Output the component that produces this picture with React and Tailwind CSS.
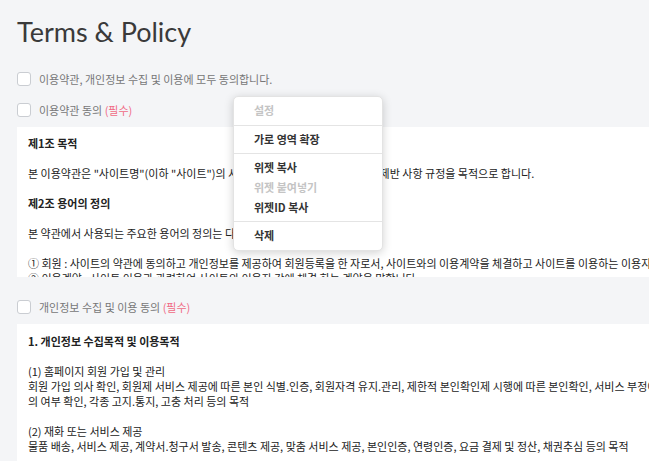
import React from "react";

const kr = { fontFamily: '"Noto Sans CJK KR", "Noto Sans", sans-serif' };

const CheckRow = ({ label, required }) => {
  return (
    <label className="flex items-center gap-[8px] h-[14px] text-[11px] text-[#777]" style={kr}>
      <span className="block w-[14px] h-[14px] bg-white border border-[#cacdd2] rounded-[3px]" />
      <span>
        {label}
        {required && <span className="text-[#f06a85]"> (필수)</span>}
      </span>
    </label>
  );
};

const ContextMenu = () => {
  return (
    <div
      className="absolute left-[233px] top-[96px] w-[150px] bg-white rounded-[5px] shadow-[0_2px_10px_rgba(0,0,0,0.18)] border border-[#e3e3e3] text-[11px] font-semibold text-[#333]"
      style={kr}
    >
      <div className="px-[20px] pt-[7px] pb-[8px] leading-[13px] text-[#c4c4c4]">설정</div>
      <div className="border-t border-[#e4e4e4]" />
      <div className="px-[20px] py-[7px] leading-[13px]">가로 영역 확장</div>
      <div className="border-t border-[#e4e4e4]" />
      <div className="px-[20px] pt-[7px] pb-[7px] flex flex-col gap-[7px] leading-[13px]">
        <div>위젯 복사</div>
        <div className="text-[#c4c4c4]">위젯 붙여넣기</div>
        <div>위젯ID 복사</div>
      </div>
      <div className="border-t border-[#e4e4e4]" />
      <div className="px-[20px] pt-[7px] pb-[8px] leading-[13px]">삭제</div>
    </div>
  );
};

const App = () => {
  return (
    <div className="relative w-full h-[461px] overflow-hidden bg-[#f4f5f7]">
      <div className="pl-[17px] pt-[14px]">
        <h1
          className="text-[27px] leading-[35px] text-[#3a3a3a]"
          style={{ fontFamily: "Lato, sans-serif" }}
        >
          Terms &amp; Policy
        </h1>

        <div className="mt-[23px]">
          <CheckRow label="이용약관, 개인정보 수집 및 이용에 모두 동의합니다." />
        </div>
        <div className="mt-[17px]">
          <CheckRow label="이용약관 동의" required />
        </div>

        {/* 이용약관 box */}
        <div
          className="mt-[10px] w-[800px] h-[150px] overflow-hidden bg-white px-[11px] pt-[9px] text-[11px] leading-[15px] text-[#222] whitespace-nowrap"
          style={kr}
        >
          <p className="font-bold">제1조 목적</p>
          <br />
          <p>
            본 이용약관은 "사이트명"(이하 "사이트")의 서비스의 이용조건과 운영에 관한 제반 사항 규정을 목적으로 합니다.
          </p>
          <br />
          <p className="font-bold">제2조 용어의 정의</p>
          <br />
          <p>본 약관에서 사용되는 주요한 용어의 정의는 다음과 같습니다.</p>
          <br />
          <p>
            ① 회원 : 사이트의 약관에 동의하고 개인정보를 제공하여 회원등록을 한 자로서, 사이트와의 이용계약을 체결하고 사이트를 이용하는 이용자를 말합니다.
          </p>
          <p>② 이용계약 : 사이트 이용과 관련하여 사이트와 이용자 간에 체결 하는 계약을 말합니다.</p>
        </div>

        <div className="mt-[23px]">
          <CheckRow label="개인정보 수집 및 이용 동의" required />
        </div>

        {/* 개인정보 box */}
        <div
          className="mt-[10px] w-[800px] h-[200px] overflow-hidden bg-white px-[11px] pt-[10px] text-[11px] leading-[15px] text-[#222] whitespace-nowrap"
          style={kr}
        >
          <p className="font-bold">1. 개인정보 수집목적 및 이용목적</p>
          <br />
          <p>(1) 홈페이지 회원 가입 및 관리</p>
          <p>
            회원 가입 의사 확인, 회원제 서비스 제공에 따른 본인 식별.인증, 회원자격 유지.관리, 제한적 본인확인제 시행에 따른 본인확인, 서비스 부정이용 방지, 만14세 미만 아동의 개인정보 수집 시 법정대리인의 동
          </p>
          <p>의 여부 확인, 각종 고지.통지, 고충 처리 등의 목적</p>
          <br />
          <p>(2) 재화 또는 서비스 제공</p>
          <p>
            물품 배송, 서비스 제공, 계약서.청구서 발송, 콘텐츠 제공, 맞춤 서비스 제공, 본인인증, 연령인증, 요금 결제 및 정산, 채권추심 등의 목적
          </p>
        </div>
      </div>

      <ContextMenu />
    </div>
  );
};

export default App;
